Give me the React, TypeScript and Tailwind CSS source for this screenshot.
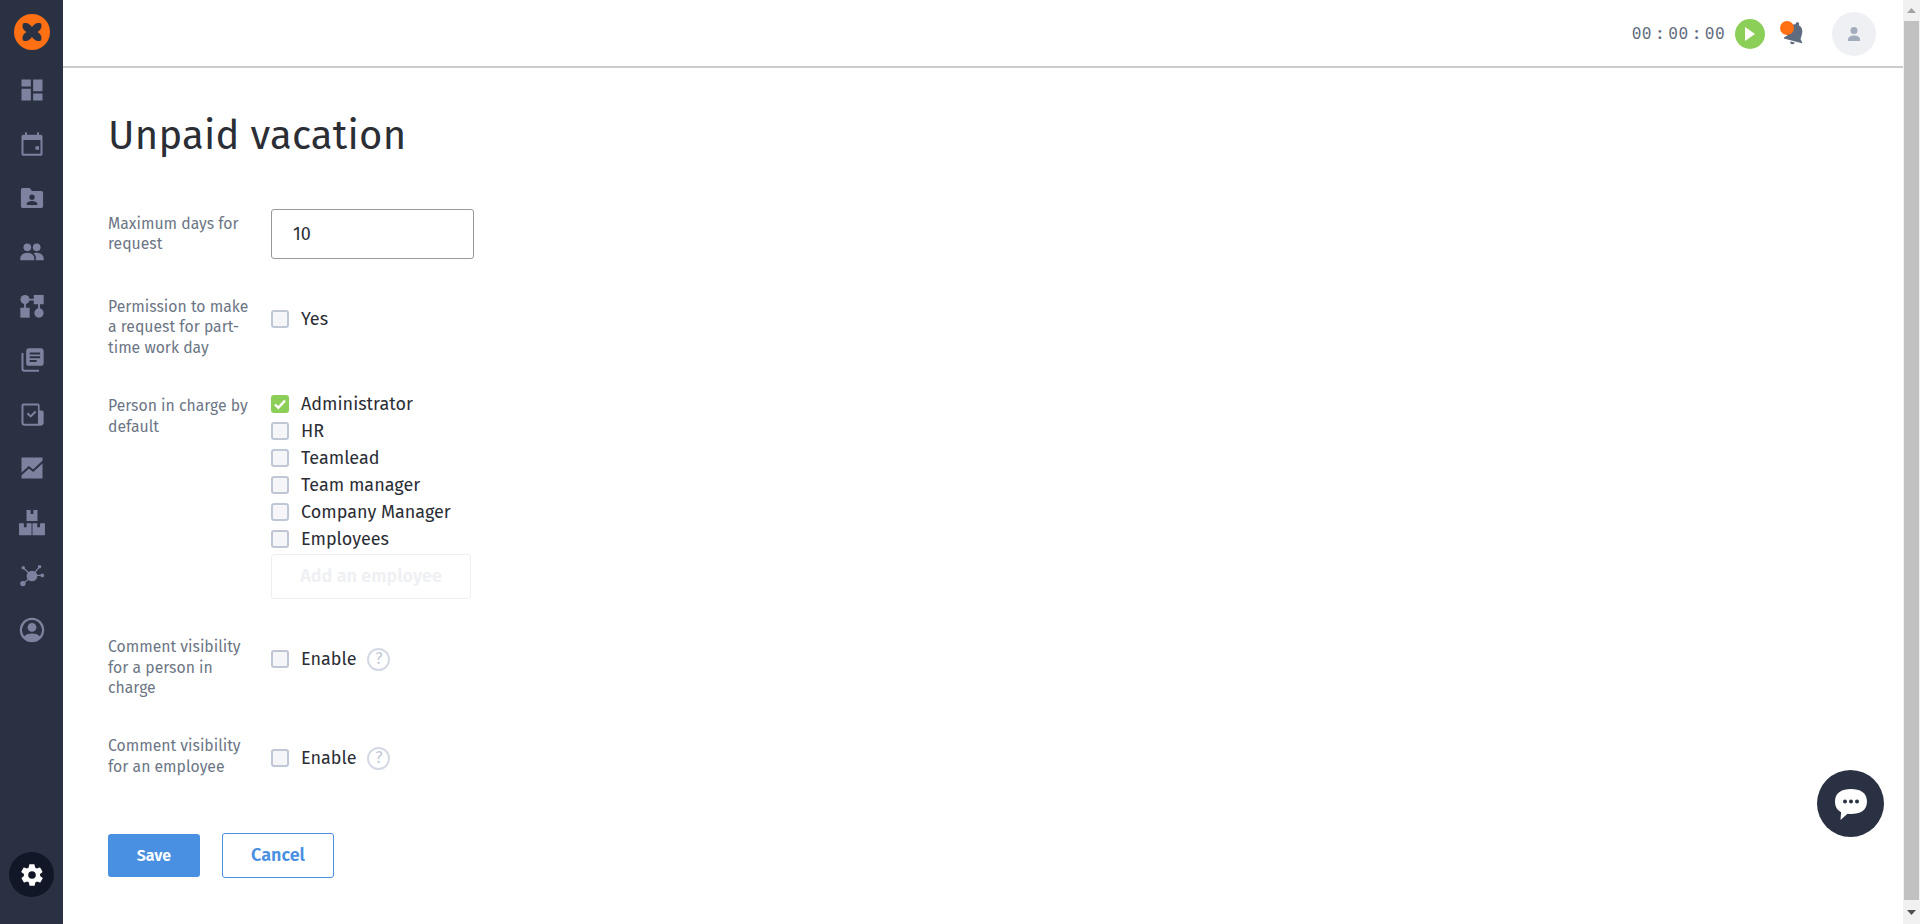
import React from "react";

const I = ({ children, size = 28 }: { children: React.ReactNode; size?: number }) => (
  <svg width={size} height={size} viewBox="0 0 24 24" fill="#7d829f">{children}</svg>
);

const navIcons: React.ReactNode[] = [
  <I><path d="M3 3h8v6H3zM3 11h8v10H3zM13 3h8v10h-8zM13 15h8v6h-8z" /></I>,
  <I><path fillRule="evenodd" d="M6 2h1.600v2h8.800V2H18v2h1.500A1.500 1.500 0 0 1 21 5.500v15a1.500 1.500 0 0 1-1.500 1.500h-15A1.500 1.500 0 0 1 3 20.500v-15A1.500 1.500 0 0 1 4.500 4H6zM4.700 8.500V20.300h14.600V8.500zM15 14h3v3h-3z" /></I>,
  <I><path fillRule="evenodd" d="M4 3.500h6l2 2.500h8a1.500 1.500 0 0 1 1.500 1.500v11.500a1.500 1.500 0 0 1-1.500 1.500H4a1.500 1.500 0 0 1-1.500-1.500V5A1.500 1.500 0 0 1 4 3.500zM12 9a2.300 2.300 0 1 0 0 4.600A2.300 2.300 0 0 0 12 9zM7.500 18h9v-1.200c0-1.500-3-2.300-4.500-2.300s-4.500.800-4.500 2.300z" /></I>,
  <I><circle cx="8" cy="8" r="3.300" /><circle cx="16" cy="8" r="3.300" /><path d="M2 19v-2c0-2.500 3.500-4.300 6-4.300s6 1.800 6 4.300v2zM15.300 19v-2.200c0-1.500-.8-2.800-2-3.700 1-.300 2-.400 2.800-.400 2.500 0 5.900 1.800 5.900 4.300v2z" /></I>,
  <I><circle cx="6" cy="6.500" r="3.900" /><rect x="13.500" y="2.500" width="8.500" height="8" /><rect x="2" y="13.500" width="8" height="8.500" /><circle cx="18" cy="18" r="4" /><path d="M6 6.500H18V18M6 6.500V14" fill="none" stroke="#7d829f" strokeWidth="1.600" /></I>,
  <I><path fillRule="evenodd" d="M9.500 2h10A2.500 2.500 0 0 1 22 4.500v10a2.500 2.500 0 0 1-2.500 2.500h-10A2.500 2.500 0 0 1 7 14.500v-10A2.500 2.500 0 0 1 9.500 2zM10 5.500v1.800h9V5.500zM10 8.700v1.800h9V8.700zM10 12v1.800h6V12z" /><path d="M3 6h1.700v13.500c0 .5.300.8.800.8H18V22H5a2 2 0 0 1-2-2z" /></I>,
  <I><path fillRule="evenodd" d="M4.500 3H17a1.500 1.500 0 0 1 1.500 1.500V9h1.900a1.600 1.600 0 0 1 1.600 1.600v9c0 1.300-1 2.400-2.400 2.400H5.500A2.500 2.500 0 0 1 3 19.500v-15A1.500 1.500 0 0 1 4.500 3zM4.700 4.700v14.800c0 .5.300.8.800.8h11.600V4.700z" /><path d="M7.500 12l1.200-1.200 2.100 2.100 3.700-3.700 1.200 1.200-4.900 4.900z" /></I>,
  <I><rect x="3" y="3" width="18" height="18" /><path d="M2.500 17.500l6.800-6.200 3.700 3L21.500 6.500" fill="none" stroke="#2a3142" strokeWidth="1.700" /></I>,
  <I><path fillRule="evenodd" d="M7.300 1.700h9.400v9.400H7.300zM10.800 1.700v3.500h2.400V1.700zM.9 13h10.700v10.400H.9zM5 13v3.500h2.400V13zM12.400 13h10.700v10.400H12.400zM16.500 13v3.500h2.400V13z" /></I>,
  <I><circle cx="12" cy="12" r="4.600" /><circle cx="4.200" cy="18.500" r="2.300" /><circle cx="4.500" cy="5" r="1.500" /><circle cx="18.500" cy="4" r="1.500" /><circle cx="20.800" cy="11.500" r="1.600" /><path d="M4.500 5l7.500 7M18.500 4l-6.500 8M21 11.500h-9M4.500 18.500L12 12" stroke="#7d829f" strokeWidth="1.100" /></I>,
  <I><path fillRule="evenodd" d="M12 1.500a10.500 10.500 0 1 1 0 21 10.500 10.500 0 0 1 0-21zM12 3.500a8.500 8.500 0 0 0-6.600 13.800C7 15.600 9.500 15 12 15s5 .600 6.600 2.300A8.500 8.500 0 0 0 12 3.500zM12 6a3.800 3.800 0 1 1 0 7.600A3.800 3.800 0 0 1 12 6z" /></I>,
];

const Check = ({ checked = false }: { checked?: boolean }) =>
  checked ? (
    <span className="w-[18px] h-[18px] shrink-0 rounded-[3px] bg-[#8bcf58] flex items-center justify-center">
      <svg width="14" height="14" viewBox="0 0 14 14" fill="none" stroke="#fff" strokeWidth="2.400"><path d="M2 7.500l3.300 3.200L12 3.600" /></svg>
    </span>
  ) : (
    <span className="w-[18px] h-[18px] shrink-0 rounded-[3px] bg-[#f6f6f8] border-2 border-[#bfc7d6]" />
  );

const Opt = ({ text, checked, help }: { text: string; checked?: boolean; help?: boolean }) => (
  <div className="flex items-center h-[18px]">
    <Check checked={checked} />
    <span className="ml-[12px] text-[18px] text-[#2b2e35]">{text}</span>
    {help && (
      <span className="ml-[11px] w-[23px] h-[23px] rounded-full border-2 border-[#d4d9e4] text-[#c3cad8] text-[16px] flex items-center justify-center">?</span>
    )}
  </div>
);

const Label = ({ lines }: { lines: string[] }) => (
  <div className="w-[163px] shrink-0 pt-[1px] text-[15.750px] leading-[20.400px] text-[#6c7685]">
    {lines.map((l) => (
      <div key={l} className="whitespace-nowrap">{l}</div>
    ))}
  </div>
);

export default function App() {
  return (
    <div className="relative flex w-full h-[924px] overflow-hidden bg-white font-['Fira_Sans','Noto_Sans',sans-serif]">
      <aside className="w-[63px] shrink-0 bg-[#2a3142] flex flex-col items-center">
        <div className="mt-[14px] w-[36px] h-[36px] rounded-full bg-[#ff6f14] flex items-center justify-center">
          <svg width="24" height="24" viewBox="0 0 24 24" fill="#2a3142"><path d="M3 3.500C7 2 10 4 12 7c2-3 5-5 9-3.500 1.500 4-.5 6.500-3.500 8.500 3 2 5 4.500 3.500 8.500-4 1.500-7-.5-9-3.500-2 3-5 5-9 3.500C1.500 16.500 3.500 14 6.500 12 3.500 10 1.500 7.500 3 3.500z" /></svg>
        </div>
        <div className="mt-[26px] flex flex-col gap-[26px]">
          {navIcons.map((ic, i) => (
            <div key={i} className="w-[28px] h-[28px]">{ic}</div>
          ))}
        </div>
        <div className="mt-auto mb-[27px] w-[45px] h-[45px] rounded-full bg-[#111726] flex items-center justify-center">
          <svg width="26" height="26" viewBox="0 0 24 24" fill="#fff"><path d="M19.400 13c.1-.3.100-.7.100-1s0-.7-.1-1l2.100-1.600c.2-.2.200-.4.100-.6l-2-3.500c-.1-.2-.4-.3-.6-.2l-2.500 1c-.5-.4-1.100-.7-1.700-1l-.4-2.600c0-.2-.2-.4-.5-.4h-4c-.3 0-.5.200-.5.400l-.4 2.600c-.6.300-1.200.6-1.700 1l-2.500-1c-.2-.1-.5 0-.6.200l-2 3.500c-.1.200-.1.400.1.600L4.600 11c-.1.300-.1.700-.1 1s0 .7.100 1l-2.100 1.600c-.2.200-.2.400-.1.600l2 3.500c.1.200.4.300.6.200l2.500-1c.5.400 1.100.7 1.700 1l.4 2.600c0 .2.200.4.500.4h4c.3 0 .5-.2.500-.4l.4-2.600c.6-.3 1.200-.6 1.700-1l2.500 1c.2.100.5 0 .6-.2l2-3.500c.1-.2.100-.4-.1-.6zM12 15.500a3.500 3.500 0 1 1 0-7 3.500 3.500 0 0 1 0 7z" /></svg>
        </div>
      </aside>

      <main className="flex-1 min-w-0 flex flex-col">
        <header className="h-[68px] shrink-0 pt-[2px] border-b-2 border-[#cccccc] flex items-center justify-end pr-[27px]">
          <span className="flex font-['Fira_Mono','Fira_Code','DejaVu_Sans_Mono',monospace] text-[17px] text-[#5f6b7d]">
            <span>00</span><span className="mx-[3px]">:</span><span>00</span><span className="mx-[3px]">:</span><span>00</span>
          </span>
          <span className="ml-[10px] w-[30px] h-[30px] rounded-full bg-[#8bcf58] flex items-center justify-center">
            <svg width="12" height="14" viewBox="0 0 12 14" fill="#fff"><path d="M1 0l10 7-10 7z" /></svg>
          </span>
          <span className="relative ml-[15px] w-[24px] h-[26px]">
            <svg className="absolute left-[1px] top-[-2px]" width="28" height="28" viewBox="0 0 24 24" fill="#5f6c80">
              <path transform="rotate(15 12 12)" d="M12 22c1.100 0 2-.9 2-2h-4c0 1.100.9 2 2 2zm6-6v-5c0-3.070-1.630-5.640-4.500-6.320V4c0-.830-.670-1.500-1.500-1.500s-1.500.670-1.500 1.500v.680C7.640 5.360 6 7.920 6 11v5l-2 2v1h16v-1l-2-2z" />
            </svg>
            <span className="absolute left-[0px] top-[0px] w-[14px] h-[14px] rounded-full bg-[#ff6f14]" />
          </span>
          <span className="ml-[28px] w-[44px] h-[44px] rounded-full bg-[#eef0f4] flex items-center justify-center">
            <svg width="16" height="16" viewBox="0 0 16 16" fill="#a3acbc"><circle cx="8" cy="4.500" r="3.500" /><path d="M2 15v-1.500C2 11 5 9.500 8 9.500s6 1.500 6 4V15z" /></svg>
          </span>
        </header>

        <div className="flex-1 pl-[45px]">
          <h1 className="mt-[44px] h-[48px] text-[40px] leading-[48px] font-normal tracking-[0.250px] text-[#2b2e35]">Unpaid vacation</h1>

          <div className="mt-[49px] flex">
            <div className="pt-[4px]"><Label lines={["Maximum days for", "request"]} /></div>
            <input readOnly value="10" className="w-[203px] h-[50px] border border-[#999999] rounded-[3px] pl-[21px] text-[18px] text-[#2b2e35] outline-none" />
          </div>

          <div className="mt-[37px] flex">
            <Label lines={["Permission to make", "a request for part-", "time work day"]} />
            <div className="pt-[14px]"><Opt text="Yes" /></div>
          </div>

          <div className="mt-[37px] flex">
            <Label lines={["Person in charge by", "default"]} />
            <div className="flex flex-col">
              <div className="flex flex-col gap-[9px]">
                <Opt text="Administrator" checked />
                <Opt text="HR" />
                <Opt text="Teamlead" />
                <Opt text="Team manager" />
                <Opt text="Company Manager" />
                <Opt text="Employees" />
              </div>
              <button className="mt-[6px] w-[200px] h-[45px] border border-[#eceef2] rounded-[3px] text-[18px] font-semibold text-[#eef0f3]">Add an employee</button>
            </div>
          </div>

          <div className="mt-[37px] flex">
            <Label lines={["Comment visibility", "for a person in", "charge"]} />
            <div className="pt-[14px]"><Opt text="Enable" help /></div>
          </div>

          <div className="mt-[37px] flex">
            <Label lines={["Comment visibility", "for an employee"]} />
            <div className="pt-[14px]"><Opt text="Enable" help /></div>
          </div>

          <div className="mt-[56px] flex items-center gap-[22px]">
            <button className="w-[92px] h-[43px] rounded-[3px] bg-[#4a90e2] text-white text-[16px] font-semibold">Save</button>
            <button className="w-[112px] h-[45px] rounded-[3px] border border-[#4a90e2] text-[#4a90e2] text-[18px] font-semibold">Cancel</button>
          </div>
        </div>
      </main>

      <div className="w-[17px] shrink-0 bg-[#f1f1f1] flex flex-col items-center">
        <div className="h-[21px] flex items-center justify-center">
          <svg width="9" height="5" viewBox="0 0 9 5" fill="#a3a3a3"><path d="M4.500 0L9 5H0z" /></svg>
        </div>
        <div className="w-[15px] flex-1 bg-[#c1c1c1]" />
        <div className="h-[24px] flex items-center justify-center">
          <svg width="9" height="5" viewBox="0 0 9 5" fill="#505050"><path d="M0 0h9L4.500 5z" /></svg>
        </div>
      </div>

      <div className="absolute left-[1817px] top-[770px] w-[67px] h-[67px] rounded-full bg-[#2a3142] flex items-center justify-center">
        <svg width="34" height="34" viewBox="0 0 34 34">
          <path fill="#fff" d="M17 2c9 0 16 3.500 16 12.500S26 27 17 27c-1 0-2.500 0-3.500-.2L6.500 33l.6-7.800C3 23 1 19.500 1 14.500 1 5.500 8 2 17 2z" />
          <circle cx="11" cy="14.500" r="2" fill="#2a3142" /><circle cx="17" cy="14.500" r="2" fill="#2a3142" /><circle cx="23" cy="14.500" r="2" fill="#2a3142" />
        </svg>
      </div>
    </div>
  );
}
